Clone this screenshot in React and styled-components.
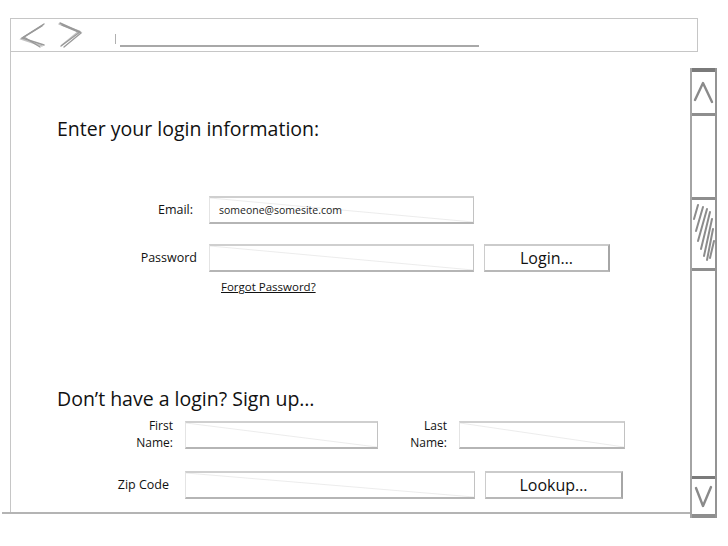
import React from "react";
import styled, { createGlobalStyle } from "styled-components";

const GlobalStyle = createGlobalStyle`
    html, body {
        margin: 0;
        padding: 0;
        background: #ffffff;
    }
    body {
        font-family: "Open Sans", "DejaVu Sans", sans-serif;
        color: #111111;
    }
`;

const sketch = {
    line: "#c6c6c6",
    dark: "#8e8e8e",
    bar: "#7a7a7a",
};

function NavArrows() {
    return (
        <svg width="70" height="28" viewBox="0 0 70 28" fill="none">
            <g stroke="#9a9a9a" strokeWidth="1.4" strokeLinecap="round">
                <path d="M26 3 L4 17 L26 24" />
                <path d="M24 5 L6 16 L22 26" />
                <path d="M25 4 L3 18 L24 25" opacity="0.6" />
                <path d="M42 2 L62 11 L43 25" />
                <path d="M44 4 L63 12 L46 26" />
                <path d="M41 3 L61 10 L44 24" opacity="0.6" />
            </g>
        </svg>
    );
}

function Chevron({ down }) {
    return (
        <svg width="22" height="26" viewBox="0 0 22 26" fill="none">
            <path
                d={down ? "M3 4 L10 22 L18 3" : "M2 20 L10 3 L19 22"}
                stroke="#8a8a8a"
                strokeWidth="2.4"
                strokeLinecap="round"
                strokeLinejoin="round"
            />
        </svg>
    );
}

function Hatch() {
    return (
        <svg width="22" height="62" viewBox="0 0 22 62" fill="none">
            <g stroke="#8c8c8c" strokeWidth="2" strokeLinecap="round">
                <path d="M5 2 L1 16" />
                <path d="M10 4 L3 28" />
                <path d="M14 6 L5 38" />
                <path d="M17 9 L8 46" />
                <path d="M19 16 L11 53" />
                <path d="M20 26 L14 57" />
                <path d="M21 38 L17 55" />
            </g>
        </svg>
    );
}

export default function App() {
    return (
        <Page>
            <GlobalStyle />
            <Toolbar>
                <NavArrows />
                <Address>
                    <AddressTick />
                    <AddressLine />
                </Address>
            </Toolbar>
            <Body>
                <Main>
                    <Heading>Enter your login information:</Heading>
                    <Form $top={54}>
                        <Row>
                            <Label $w={140} $pad={4}>Email:</Label>
                            <Field $w={265}>someone@somesite.com</Field>
                        </Row>
                        <Row>
                            <Label $w={140}>Password</Label>
                            <Field $w={265} />
                            <Button $w={126}>Login…</Button>
                        </Row>
                        <Forgot href="#">Forgot Password?</Forgot>
                    </Form>

                    <Heading $top={92}>Don’t have a login? Sign up…</Heading>
                    <Form $top={6}>
                        <Row>
                            <Label $w={116}>
                                <Line>First</Line>
                                <Line>Name:</Line>
                            </Label>
                            <Field $w={193} />
                            <Label $w={57}>
                                <Line>Last</Line>
                                <Line>Name:</Line>
                            </Label>
                            <Field $w={166} />
                        </Row>
                        <Row>
                            <Label $w={116} $pad={4}>Zip Code</Label>
                            <Field $w={290} />
                            <Button $w={138}>Lookup…</Button>
                        </Row>
                    </Form>
                </Main>
                <Scrollbar>
                    <ScrollButton $top={4} $bottom={3} $h={48}>
                        <Chevron />
                    </ScrollButton>
                    <Track>
                        <Thumb>
                            <Hatch />
                        </Thumb>
                    </Track>
                    <ScrollButton $top={3} $bottom={4} $h={42}>
                        <Chevron down />
                    </ScrollButton>
                </Scrollbar>
            </Body>
        </Page>
    );
}

const Page = styled.div`
    width: 728px;
    height: 546px;
    box-sizing: border-box;
    padding-top: 18px;
    background: #ffffff;
    overflow: hidden;
`;

const Toolbar = styled.div`
    margin-left: 10px;
    width: 688px;
    height: 34px;
    box-sizing: border-box;
    border: 1px solid ${sketch.line};
    display: flex;
    align-items: center;
    padding-left: 7px;
`;

const Address = styled.div`
    margin-left: 27px;
    display: flex;
    align-items: flex-end;
    gap: 4px;
    padding-top: 10px;
`;

const AddressTick = styled.div`
    width: 1px;
    height: 10px;
    background: #b0b0b0;
    margin-bottom: 3px;
`;

const AddressLine = styled.div`
    width: 359px;
    height: 2px;
    background: #a8a8a8;
`;

const Body = styled.div`
    display: flex;
    align-items: flex-start;
`;

const Main = styled.div`
    position: relative;
    margin-left: 10px;
    width: 680px;
    height: 462px;
    box-sizing: border-box;
    border-left: 1px solid ${sketch.line};
    border-bottom: 2px solid #b4b4b4;
    padding: 64px 0 0 46px;

    &::after {
        content: "";
        position: absolute;
        left: -9px;
        bottom: -2px;
        width: 9px;
        height: 2px;
        background: #b4b4b4;
    }
`;

const Heading = styled.h1`
    margin: ${(p) => p.$top || 0}px 0 0 0;
    font-size: 19.5px;
    font-weight: 400;
    line-height: 26px;
    color: #111111;
`;

const Form = styled.div`
    margin-top: ${(p) => p.$top}px;
    display: flex;
    flex-direction: column;
    gap: 20px;
`;

const Row = styled.div`
    display: flex;
    align-items: center;
    gap: 12px;
`;

const Label = styled.div`
    width: ${(p) => p.$w}px;
    padding-right: ${(p) => p.$pad || 0}px;
    box-sizing: border-box;
    text-align: right;
    font-size: 12.5px;
    line-height: 16px;
    color: #111111;
`;

const Line = styled.div`
    font-size: 12px;
    height: 16.5px;
    line-height: 16.5px;
`;

const Field = styled.div`
    width: ${(p) => p.$w}px;
    height: 28px;
    box-sizing: border-box;
    border-top: 2px solid #cfcfcf;
    border-bottom: 2px solid #b5b5b5;
    border-left: 1px solid #e4e4e4;
    border-right: 1px solid #c2c2c2;
    background: linear-gradient(
        to top right,
        transparent calc(50% - 1px),
        #ececec 50%,
        transparent calc(50% + 1px)
    );
    display: flex;
    align-items: center;
    padding-left: 9px;
    font-size: 10.5px;
    color: #222222;
`;

const Button = styled.div`
    width: ${(p) => p.$w}px;
    height: 28px;
    box-sizing: border-box;
    border-top: 2px solid #cbcbcb;
    border-bottom: 2px solid #b8b8b8;
    border-left: 1px solid #cccccc;
    border-right: 2px solid #a6a6a6;
    display: flex;
    align-items: center;
    justify-content: center;
    font-size: 16px;
    color: #111111;
    margin-left: -2px;
`;

const Forgot = styled.a`
    margin: -13px 0 0 164px;
    font-size: 11.5px;
    color: #111111;
    text-decoration: underline;
`;

const Scrollbar = styled.div`
    margin-top: 16px;
    width: 27px;
    height: 450px;
    box-sizing: border-box;
    border-left: 2px solid #a4a4a4;
    border-right: 2px solid #949494;
    display: flex;
    flex-direction: column;
`;

const ScrollButton = styled.div`
    height: ${(p) => p.$h}px;
    box-sizing: border-box;
    border-top: ${(p) => p.$top}px solid ${sketch.bar};
    border-bottom: ${(p) => p.$bottom}px solid ${sketch.dark};
    display: flex;
    align-items: center;
    justify-content: center;
`;

const Track = styled.div`
    flex: 1;
    padding-top: 81px;
`;

const Thumb = styled.div`
    height: 74px;
    box-sizing: border-box;
    border-top: 3px solid ${sketch.dark};
    border-bottom: 3px solid ${sketch.dark};
    display: flex;
    align-items: center;
    justify-content: center;
`;
